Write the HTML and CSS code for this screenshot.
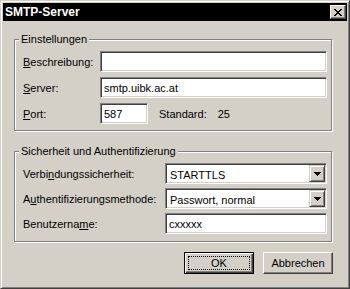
FILE: index.html
```html
<!DOCTYPE html>
<html lang="de">
<head>
    <meta charset="UTF-8">
    <meta name="viewport" content="width=device-width, initial-scale=1.0">
    <title>SMTP-Server</title>
    <link rel="stylesheet" href="styles.css">
</head>
<body>
    <div class="window">
        <div class="titlebar">
            <span class="title">SMTP-Server</span>
            <button class="close-btn" type="button" aria-label="Schließen">
                <svg width="8" height="7" viewBox="0 0 8 7" shape-rendering="crispEdges">
                    <path d="M0 0h2v1H0zM6 0h2v1H6zM1 1h2v1H1zM5 1h2v1H5zM2 2h4v1H2zM3 3h2v1H3zM2 4h4v1H2zM1 5h2v1H1zM5 5h2v1H5zM0 6h2v1H0zM6 6h2v1H6z" fill="#000"/>
                </svg>
            </button>
        </div>

        <div class="content">
            <div class="group group-settings">
                <span class="group-title">Einstellungen</span>
                <div class="rows">
                    <label class="label"><u>B</u>eschreibung:</label>
                    <input class="field" type="text" value="">

                    <label class="label"><u>S</u>erver:</label>
                    <input class="field" type="text" value="smtp.uibk.ac.at">

                    <label class="label"><u>P</u>ort:</label>
                    <div class="port-row">
                        <input class="field port" type="text" value="587">
                        <span class="std-label">Standard:</span>
                        <span class="std-value">25</span>
                    </div>
                </div>
            </div>

            <div class="group group-security">
                <span class="group-title">Sicherheit und Authentifizierung</span>
                <div class="rows">
                    <label class="label">Verbi<u>n</u>dungssicherheit:</label>
                    <div class="combo">
                        <span class="combo-text">STARTTLS</span>
                        <span class="combo-btn">
                            <svg width="7" height="4" viewBox="0 0 7 4" shape-rendering="crispEdges">
                                <path d="M0 0h7v1H0zM1 1h5v1H1zM2 2h3v1H2zM3 3h1v1H3z" fill="#000"/>
                            </svg>
                        </span>
                    </div>

                    <label class="label">A<u>u</u>thentifizierungsmethode:</label>
                    <div class="combo">
                        <span class="combo-text">Passwort, normal</span>
                        <span class="combo-btn">
                            <svg width="7" height="4" viewBox="0 0 7 4" shape-rendering="crispEdges">
                                <path d="M0 0h7v1H0zM1 1h5v1H1zM2 2h3v1H2zM3 3h1v1H3z" fill="#000"/>
                            </svg>
                        </span>
                    </div>

                    <label class="label">Benutzerna<u>m</u>e:</label>
                    <input class="field" type="text" value="cxxxxx">
                </div>
            </div>

            <div class="buttons">
                <button class="btn btn-default" type="button"><span class="focus">OK</span></button>
                <button class="btn" type="button">Abbrechen</button>
            </div>
        </div>
    </div>
</body>
</html>
```

FILE: styles.css
```css
body, html {
    margin: 0;
    padding: 0;
}

body {
    font-family: "Liberation Sans", Arial, sans-serif;
    font-size: 11px;
    color: #000000;
}

.window {
    width: 350px;
    height: 289px;
    box-sizing: border-box;
    background: #d4d0c8;
    border: 1px solid;
    border-color: #d4d0c8 #404040 #404040 #d4d0c8;
    box-shadow: inset 1px 1px 0 #ffffff, inset -1px -1px 0 #808080;
    padding: 2px;
    display: flex;
    flex-direction: column;
}

.titlebar {
    height: 18px;
    background: #000000;
    color: #ffffff;
    display: flex;
    align-items: center;
    justify-content: space-between;
    padding: 0 1px 0 2px;
}

.title {
    font-weight: bold;
    font-size: 12px;
    line-height: 14px;
}

.close-btn {
    width: 16px;
    height: 14px;
    padding: 0;
    margin: 0;
    box-sizing: border-box;
    background: #d4d0c8;
    border: 1px solid;
    border-color: #ffffff #404040 #404040 #ffffff;
    box-shadow: inset -1px -1px 0 #808080;
    display: flex;
    align-items: center;
    justify-content: center;
}

.close-btn svg {
    display: block;
}

.content {
    padding: 0 0 0 11px;
}

/* etched group box */
.group {
    position: relative;
    width: 318px;
    box-sizing: border-box;
    border: 1px solid #808080;
    box-shadow: 1px 1px 0 #ffffff, inset 1px 1px 0 #ffffff;
    padding: 11px 4px 6px 8px;
}

.group-settings {
    margin-top: 18px;
}

.group-security {
    margin-top: 20px;
    padding-bottom: 7px;
}

.group-title {
    position: absolute;
    top: -7px;
    left: 4px;
    padding: 0 2px;
    line-height: 13px;
    background: #d4d0c8;
}

.rows {
    display: grid;
    grid-template-columns: 77px 1fr;
    grid-auto-rows: 21px;
    row-gap: 5px;
    align-items: center;
}

.group-security .rows {
    grid-template-columns: 142px 1fr;
    row-gap: 4px;
}

.label {
    line-height: 21px;
    padding-top: 1px;
    white-space: nowrap;
}

.field {
    height: 21px;
    width: 100%;
    box-sizing: border-box;
    margin: 0;
    padding: 1px 3px 0;
    font-family: inherit;
    font-size: 11px;
    color: #000000;
    background: #ffffff;
    border: 1px solid;
    border-color: #808080 #ffffff #ffffff #808080;
    box-shadow: inset 1px 1px 0 #404040, inset -1px -1px 0 #d4d0c8;
    outline: none;
}

.port-row {
    display: flex;
    align-items: center;
    height: 21px;
}

.field.port {
    width: 48px;
    flex: none;
}

.std-label {
    margin-left: 11px;
    padding-top: 1px;
}

.std-value {
    margin-left: 11px;
    padding-top: 1px;
}

.combo {
    height: 21px;
    box-sizing: border-box;
    background: #ffffff;
    border: 1px solid;
    border-color: #808080 #ffffff #ffffff #808080;
    box-shadow: inset 1px 1px 0 #404040, inset -1px -1px 0 #d4d0c8;
    padding: 1px 1px 1px 1px;
    display: flex;
    align-items: stretch;
}

.combo-text {
    flex: 1;
    padding-left: 3px;
    line-height: 18px;
    padding-top: 1px;
    white-space: nowrap;
}

.combo-btn {
    width: 16px;
    box-sizing: border-box;
    background: #d4d0c8;
    border: 1px solid;
    border-color: #d4d0c8 #404040 #404040 #d4d0c8;
    box-shadow: inset 1px 1px 0 #ffffff, inset -1px -1px 0 #808080;
    display: flex;
    align-items: center;
    justify-content: center;
}

.combo-btn svg {
    display: block;
}

.buttons {
    width: 319px;
    margin-top: 10px;
    display: flex;
    justify-content: flex-end;
    gap: 9px;
}

.btn {
    width: 70px;
    height: 22px;
    box-sizing: border-box;
    margin: 0;
    padding: 0;
    font-family: inherit;
    font-size: 11px;
    color: #000000;
    background: #d4d0c8;
    border: 1px solid;
    border-color: #ffffff #404040 #404040 #ffffff;
    box-shadow: inset -1px -1px 0 #808080;
}

.btn-default {
    border-color: #000000;
    box-shadow: inset 1px 1px 0 #ffffff, inset -1px -1px 0 #404040, inset -2px -2px 0 #808080;
    padding: 3px;
}

.btn-default .focus {
    display: flex;
    align-items: center;
    justify-content: center;
    height: 100%;
    box-sizing: border-box;
    border: 1px dotted #000000;
}
```
